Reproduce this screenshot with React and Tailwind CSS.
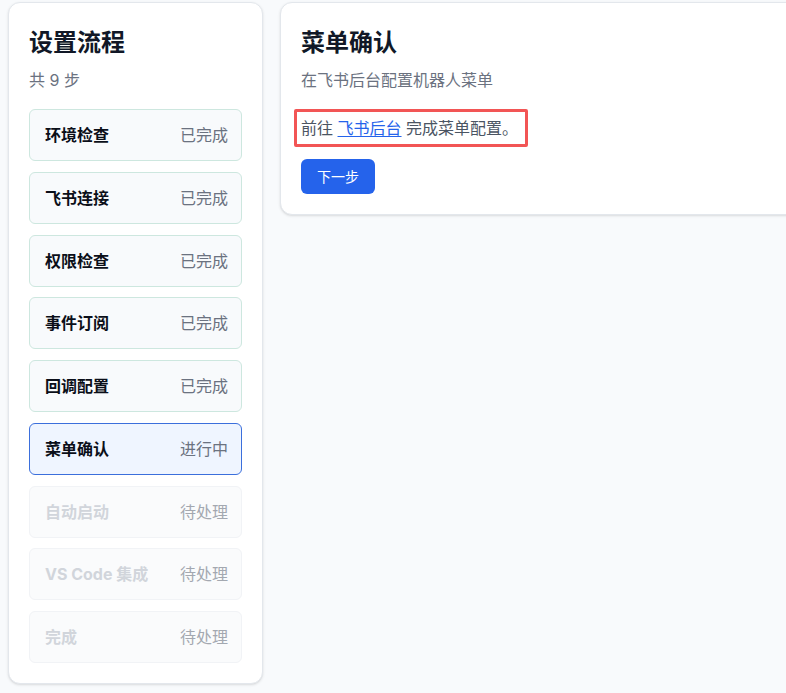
import React from "react";

const steps = [
  { name: "环境检查", status: "done" },
  { name: "飞书连接", status: "done" },
  { name: "权限检查", status: "done" },
  { name: "事件订阅", status: "done" },
  { name: "回调配置", status: "done" },
  { name: "菜单确认", status: "active" },
  { name: "自动启动", status: "pending" },
  { name: "VS Code 集成", status: "pending" },
  { name: "完成", status: "pending" },
];

const label = { done: "已完成", active: "进行中", pending: "待处理" };

function Step({ name, status }) {
  const box =
    status === "done"
      ? "border-[#cde7df] bg-[#f8fafc]"
      : status === "active"
      ? "border-[#3b6fdc] bg-[#eff5ff]"
      : "border-[#f1f3f6] bg-[#fafbfc]";
  const title =
    status === "pending" ? "text-[#d1d5db]" : "text-[#0b0f19]";
  const st = status === "pending" ? "text-[#a3a8b0]" : "text-[#6b7280]";
  return (
    <div
      className={`flex h-[52px] items-center justify-between rounded-md border pl-[15px] pr-[13px] ${box}`}
    >
      <span className={`text-[16px] font-bold leading-6 ${title}`}>{name}</span>
      <span className={`text-[16px] leading-6 ${st}`}>{label[status]}</span>
    </div>
  );
}

export default function App() {
  return (
    <div
      className="flex h-[693px] w-[786px] items-start gap-[17px] overflow-hidden bg-[#f8fafc] pl-2 pt-[2px]"
      style={{ fontFamily: 'Inter, "Noto Sans CJK SC", sans-serif' }}
    >
      <div className="w-[255px] shrink-0 rounded-xl border border-[#e3e7ec] bg-white px-5 pb-5 pt-6 shadow-sm">
        <h1 className="text-[24px] font-bold leading-8 text-[#111827]">设置流程</h1>
        <p className="mt-[9px] text-[16px] leading-6 text-[#6b7280]">共 9 步</p>
        <div className="mt-[17px] flex flex-col gap-[10.75px]">
          {steps.map((s) => (
            <Step key={s.name} {...s} />
          ))}
        </div>
      </div>
      <div className="w-[600px] shrink-0 rounded-xl border border-[#e3e7ec] bg-white px-5 pb-5 pt-6 shadow-sm">
        <h2 className="text-[24px] font-bold leading-8 text-[#111827]">菜单确认</h2>
        <p className="mt-[9px] text-[16px] leading-6 text-[#6b7280]">在飞书后台配置机器人菜单</p>
        <div className="-ml-[7px] mt-[17px] flex h-[38px] w-[234px] items-center rounded-[2px] border-[3px] border-[#f25555] pl-1">
          <p className="text-[16px] leading-6 text-[#4b5563]">
            前往{" "}
            <a href="#" className="text-[#2563eb] underline underline-offset-2">
              飞书后台
            </a>{" "}
            完成菜单配置。
          </p>
        </div>
        <button className="mt-3 flex h-[35px] w-[74px] items-center justify-center rounded-md bg-[#2563eb] text-[14px] text-white">
          下一步
        </button>
      </div>
    </div>
  );
}
